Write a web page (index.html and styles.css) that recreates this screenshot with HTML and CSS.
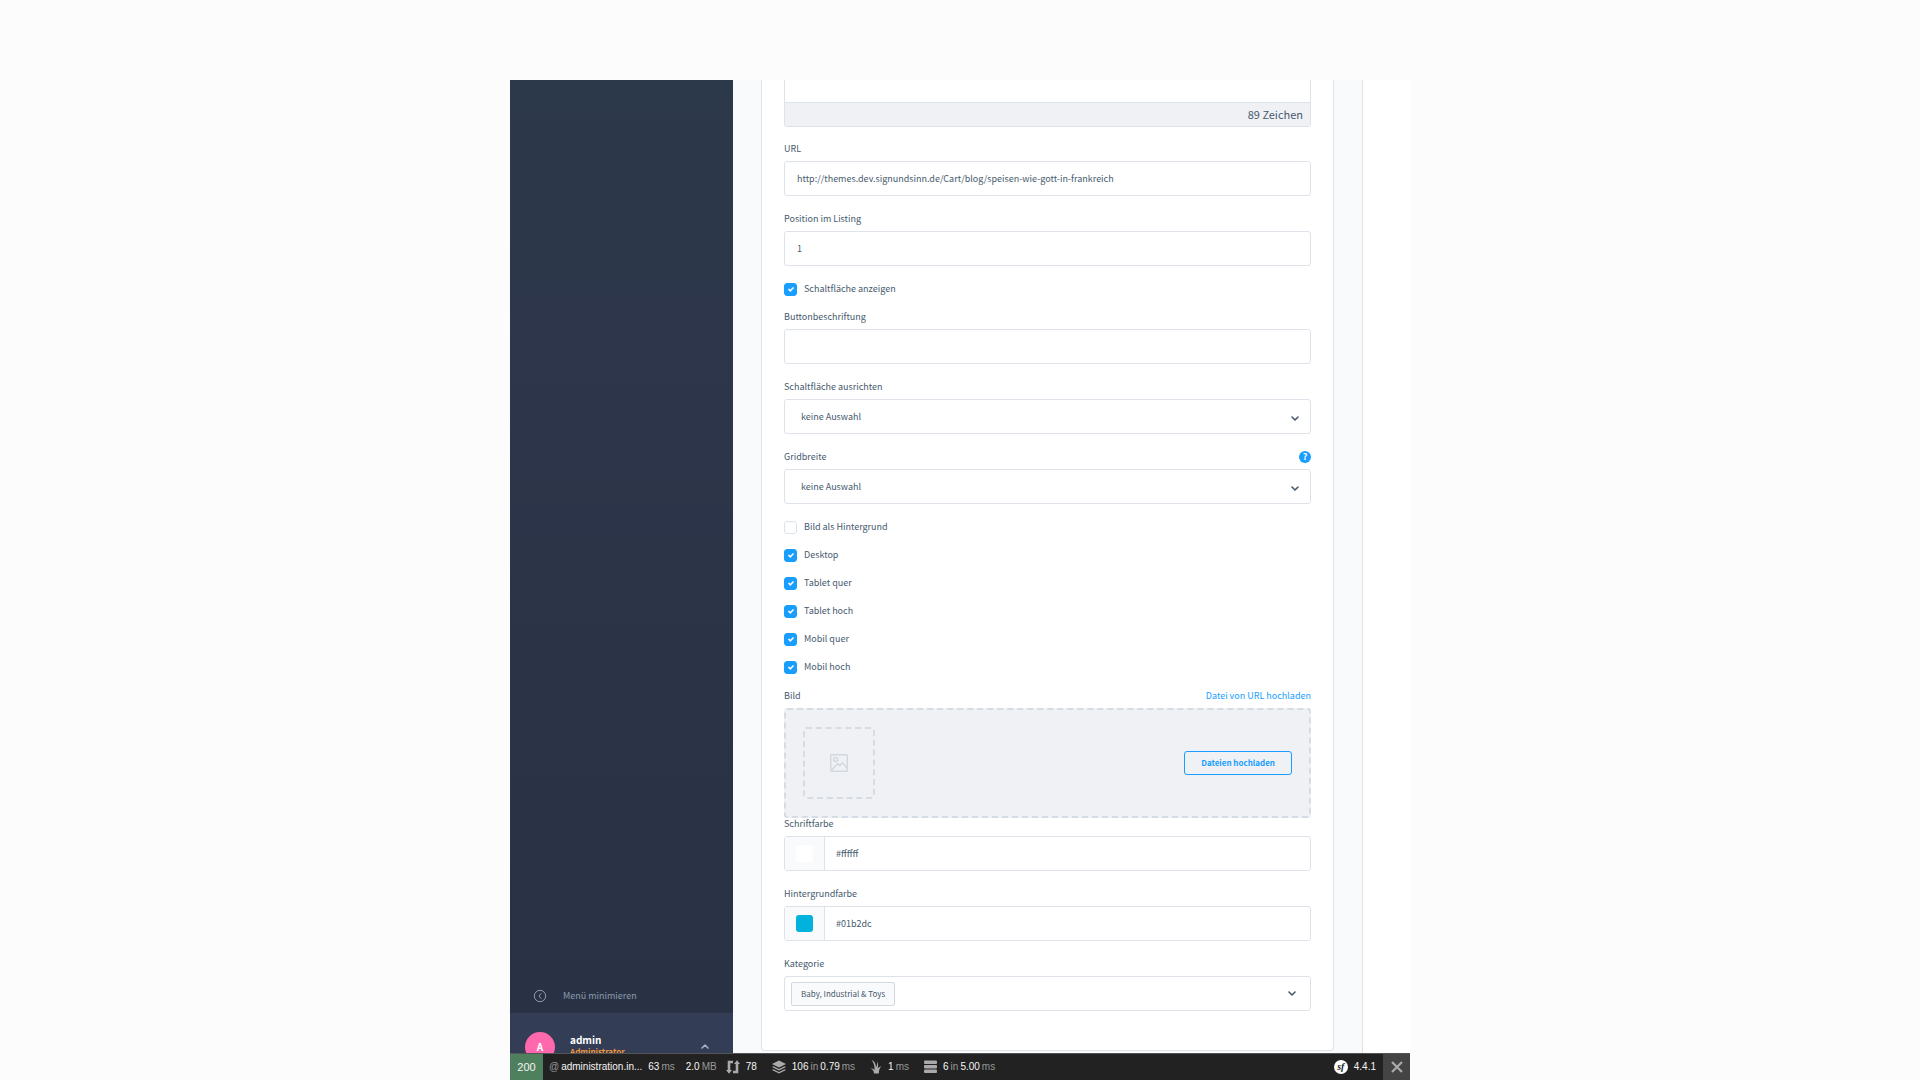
FILE: index.html
```html
<!DOCTYPE html>
<html lang="de">
<head>
<meta charset="utf-8">
<title>Administration</title>
<link rel="stylesheet" href="styles.css">
</head>
<body>
<svg class="sprite" aria-hidden="true">
  <symbol id="chevron" viewBox="0 0 8 5"><path d="M1 1l3 3 3-3" fill="none" stroke="currentColor" stroke-width="1.6" stroke-linecap="round" stroke-linejoin="round"/></symbol>
</svg>
<div class="frame">
  <div class="workspace">
    <nav class="sidebar">
      <button class="minimize" type="button">
        <svg width="14" height="14" viewBox="0 0 14 14" fill="none" stroke="currentColor"><circle cx="7" cy="7" r="5.7"/><path d="M8 4.6L6 7l2 2.4" stroke-linecap="round"/></svg>
        <span>Menü minimieren</span>
      </button>
      <div class="user">
        <span class="avatar">A</span>
        <div class="user-text"><span class="user-name">admin</span><span class="user-role">Administrator</span></div>
        <svg class="chevron up" width="8" height="5"><use href="#chevron"/></svg>
      </div>
    </nav>
    <main class="content">
      <form class="card">
        <div class="editor">
          <div class="editor-text"></div>
          <div class="editor-count">89 Zeichen</div>
        </div>
        <div class="field">
          <label for="url">URL</label>
          <input class="control" id="url" type="text" value="http://themes.dev.signundsinn.de/Cart/blog/speisen-wie-gott-in-frankreich">
        </div>
        <div class="field">
          <label for="pos">Position im Listing</label>
          <input class="control" id="pos" type="text" value="1">
        </div>
        <label class="check"><input type="checkbox" checked>Schaltfläche anzeigen</label>
        <div class="field">
          <label for="caption">Buttonbeschriftung</label>
          <input class="control" id="caption" type="text">
        </div>
        <div class="field">
          <label for="align">Schaltfläche ausrichten</label>
          <div class="select">
            <select class="control" id="align"><option>keine Auswahl</option></select>
            <svg class="chevron" width="8" height="5"><use href="#chevron"/></svg>
          </div>
        </div>
        <div class="field">
          <div class="label-row">
            <label for="grid">Gridbreite</label>
            <button class="help" type="button" aria-label="Hilfe">?</button>
          </div>
          <div class="select">
            <select class="control" id="grid"><option>keine Auswahl</option></select>
            <svg class="chevron" width="8" height="5"><use href="#chevron"/></svg>
          </div>
        </div>
        <label class="check"><input type="checkbox">Bild als Hintergrund</label>
        <label class="check"><input type="checkbox" checked>Desktop</label>
        <label class="check"><input type="checkbox" checked>Tablet quer</label>
        <label class="check"><input type="checkbox" checked>Tablet hoch</label>
        <label class="check"><input type="checkbox" checked>Mobil quer</label>
        <label class="check"><input type="checkbox" checked>Mobil hoch</label>
        <div class="upload">
          <div class="label-row">
            <span>Bild</span>
            <a href="#">Datei von URL hochladen</a>
          </div>
          <div class="dropzone">
            <div class="thumb">
              <svg width="18" height="18" viewBox="0 0 18 18" fill="none" stroke="currentColor" stroke-width="1.5" stroke-linejoin="round"><rect x=".7" y=".7" width="16.6" height="16.6" rx="1"/><circle cx="5.6" cy="5.6" r="2"/><path d="M1.500 16.500L7.800 9.500l2 2.200 2.400-3 5 5.300"/></svg>
            </div>
            <button class="upload-button" type="button">Dateien hochladen</button>
          </div>
        </div>
        <div class="field">
          <label for="fg">Schriftfarbe</label>
          <div class="control color">
            <span class="swatch-cell"><span class="swatch white"></span></span>
            <input id="fg" type="text" value="#ffffff">
          </div>
        </div>
        <div class="field">
          <label for="bg">Hintergrundfarbe</label>
          <div class="control color">
            <span class="swatch-cell"><span class="swatch cyan"></span></span>
            <input id="bg" type="text" value="#01b2dc">
          </div>
        </div>
        <div class="field">
          <label for="cat">Kategorie</label>
          <div class="control tags">
            <span class="tag">Baby, Industrial &amp; Toys</span>
            <input id="cat" type="text">
            <svg class="chevron" width="8" height="5"><use href="#chevron"/></svg>
          </div>
        </div>
      </form>
    </main>
    <aside class="side-panel"></aside>
  </div>
  <footer class="toolbar">
    <span class="status">200</span>
    <span class="item route"><i>@</i> administration.in...</span>
    <span class="item time">63 <i>ms</i></span>
    <span class="item memory">2.0 <i>MB</i></span>
    <span class="item"><svg width="14" height="14" viewBox="0 0 14 14" fill="none" stroke="currentColor" stroke-width="2.600"><path d="M7 2H3V11M7 12h4V3"/><path d="M0 10h6L3 13.800zM8 4h6L11 .2z" fill="currentColor" stroke="none"/></svg>78</span>
    <span class="item"><svg width="14" height="14" viewBox="0 0 14 14" fill="currentColor"><path d="M7 .5l7 3.500-7 3.500L0 4z"/><path d="M1.500 6.200L7 9l5.500-2.800L14 7l-7 3.500L0 7z"/><path d="M1.500 9.200L7 12l5.500-2.800L14 10l-7 3.500L0 10z"/></svg>106 <i>in</i> 0.79 <i>ms</i></span>
    <span class="item"><svg width="12" height="14" viewBox="0 0 11 14" fill="currentColor"><path d="M1 0c3 1 4.500 4 4.500 7.500C6.500 5 7 3 7 1.500 8 4 7.500 6.500 7.300 8.500 8.500 7 9.500 6.500 11 6 9 8 8.500 10 8.300 13.500H3.500C3.400 11 2 9.500 0 8.300c1.800 0 3 .7 4 1.800C4.200 6.500 3.500 2.500 1 0z"/></svg>1 <i>ms</i></span>
    <span class="item"><svg width="13" height="14" viewBox="0 0 13 14" fill="currentColor"><rect y=".5" width="13" height="3.500" rx="1"/><rect y="5" width="13" height="3.500" rx="1"/><rect y="9.500" width="13" height="3.500" rx="1"/></svg>6 <i>in</i> 5.00 <i>ms</i></span>
    <span class="item version"><span class="sf">sf</span>4.4.1</span>
    <button class="close" type="button" aria-label="Schließen"><svg width="12" height="12" viewBox="0 0 12 12" fill="none" stroke="currentColor" stroke-width="2.200"><path d="M1 1l10 10M11 1L1 11"/></svg></button>
  </footer>
</div>
</body>
</html>
```
FILE: styles.css
```css
* { box-sizing: border-box; }

body {
  margin: 0;
  padding-top: 80px;
  background: #fcfcfc;
  color: #475a6e;
  font: 9px/18px "Noto Sans CJK SC", "Noto Sans", sans-serif;
}

button, input, select { font: inherit; color: inherit; margin: 0; }
button { padding: 0; border: 0; background: none; }
input { min-width: 0; outline: 0; }
a { color: #189eff; text-decoration: none; }
.sprite { position: absolute; width: 0; height: 0; }

.frame {
  display: flex;
  flex-direction: column;
  max-width: 900px;
  height: calc(100vh - 80px);
  margin: 0 auto;
  background: #fff;
}
.workspace { display: flex; flex: 1; min-height: 0; overflow: hidden; }

/* Sidebar */
.sidebar {
  display: flex;
  flex-direction: column;
  justify-content: flex-end;
  flex: 0 0 223px;
  background: linear-gradient(#2c394a, #2d364a 25%, #293244);
}
.minimize {
  display: flex;
  align-items: center;
  gap: 16px;
  padding: 8px 23px;
  color: #8d9bad;
}
.user {
  display: flex;
  align-items: flex-start;
  max-height: 40px;
  padding: 19px 24px 0 15px;
  overflow: hidden;
  background: #333d55;
}
.avatar {
  width: 30px;
  height: 30px;
  border-radius: 50%;
  background: #ff68ac;
  color: #fff;
  font-size: 10px;
  font-weight: bold;
  line-height: 30px;
  text-align: center;
}
.user-text { display: flex; flex-direction: column; flex: 1; margin-left: 15px; line-height: 12px; padding-top: 2px; font-weight: bold; }
.user-name { color: #fff; font-size: 10px; }
.user-role { color: #f0963c; font-size: 8px; }
.user .chevron { margin-top: 12px; color: #a4b0c0; }
.up { transform: rotate(180deg); }

/* Form card */
.content { flex: 1; padding: 0 28px; background: #f9fafc; }
.card {
  padding: 0 22px 25px;
  border: 1px solid #dde3e9;
  border-top: 0;
  border-radius: 0 0 4px 4px;
  background: #fff;
}
.side-panel { flex: 0 0 48px; border-left: 1px solid #dde3e9; background: #fff; }

.editor {
  margin-bottom: 13px;
  border: 1px solid #dde3e9;
  border-top: 0;
  border-radius: 0 0 3px 3px;
}
.editor-text { height: 22px; }
.editor-count {
  height: 24px;
  padding-right: 7px;
  border-top: 1px solid #dde3e9;
  background: #f0f1f5;
  font-size: 11px;
  line-height: 23px;
  text-align: right;
}

.field { display: flex; flex-direction: column; gap: 3px; margin-bottom: 14px; }
.control {
  width: 100%;
  height: 35px;
  padding: 0 12px;
  border: 1px solid #dde3e9;
  border-radius: 3px;
  background: #fff;
}
.label-row { display: flex; align-items: center; justify-content: space-between; height: 18px; }
.select { position: relative; }
.select select { display: block; padding-left: 16px; appearance: none; }
.select .chevron { position: absolute; right: 12px; top: 17px; pointer-events: none; }
.help {
  width: 12px;
  height: 12px;
  border-radius: 50%;
  background: #189eff;
  color: #fff;
  font-weight: bold;
  line-height: 12px;
}

.check { display: flex; align-items: center; gap: 7px; height: 18px; margin-bottom: 10px; }
.check input {
  width: 13px;
  height: 13px;
  border: 1px solid #dde3e9;
  border-radius: 3px;
  appearance: none;
}
.check input:checked {
  border-color: #189eff;
  background: #189eff url("data:image/svg+xml,%3Csvg xmlns='http://www.w3.org/2000/svg' viewBox='0 0 10 10'%3E%3Cpath d='M2.500 5l1.800 1.800 3.200-3.400' fill='none' stroke='white' stroke-width='1.500'/%3E%3C/svg%3E") center / 10px no-repeat;
}

.upload { display: flex; flex-direction: column; gap: 3px; margin-bottom: -3px; padding-top: 1px; }
.dropzone {
  display: flex;
  align-items: center;
  justify-content: space-between;
  height: 110px;
  padding: 0 17px;
  border: 2px dashed #d5dce3;
  border-radius: 3px;
  background: #f0f1f5;
}
.thumb {
  display: grid;
  place-items: center;
  width: 72px;
  height: 72px;
  border: 2px dashed #d5dce3;
  border-radius: 3px;
  color: #d1d9e0;
}
.upload-button {
  height: 24px;
  padding: 0 16px;
  border: 1px solid #189eff;
  border-radius: 3px;
  color: #189eff;
  font-size: 8px;
  font-weight: bold;
}

.color { display: flex; padding: 0; }
.color input { flex: 1; padding: 0 11px; border: 0; background: none; }
.swatch-cell {
  display: grid;
  place-items: center;
  width: 40px;
  border-right: 1px solid #dde3e9;
  background: #f9fafc;
}
.swatch { width: 17px; height: 17px; border-radius: 3px; }
.white { background: #fff; }
.cyan { background: #01b2dc; }

.tags { display: flex; align-items: center; padding: 0 14px 0 6px; }
.tags input { flex: 1; border: 0; background: none; }
.tag {
  padding: 2px 9px;
  border: 1px solid #d1d9e0;
  border-radius: 2px;
  background: #f9fafc;
  font-size: 8px;
}

/* Debug toolbar */
.toolbar {
  display: flex;
  align-items: stretch;
  flex: 0 0 27px;
  border-top: 1px solid #555;
  background: #222;
  color: #f5f5f5;
  font: 10px/26px "Liberation Sans", Arial, sans-serif;
  white-space: nowrap;
}
.toolbar i { color: #999; font-style: normal; }
.status { width: 33px; background: #4f805d; font-size: 11px; text-align: center; }
.item { display: flex; align-items: center; gap: 2px; margin-right: 15px; }
.item svg { margin-right: 4px; color: #aaa; }
.route { margin: 0 6px; }
.time { margin-right: 11px; }
.memory { margin-right: 9px; }
.version { margin: 0 7px 0 auto; gap: 6px; }
.sf {
  width: 14px;
  height: 14px;
  border-radius: 50%;
  background: #fff;
  color: #222;
  font: italic bold 10px/13px "Liberation Serif", serif;
  text-align: center;
}
.close { display: grid; place-items: center; width: 27px; background: #444; color: #aaa; }
```
